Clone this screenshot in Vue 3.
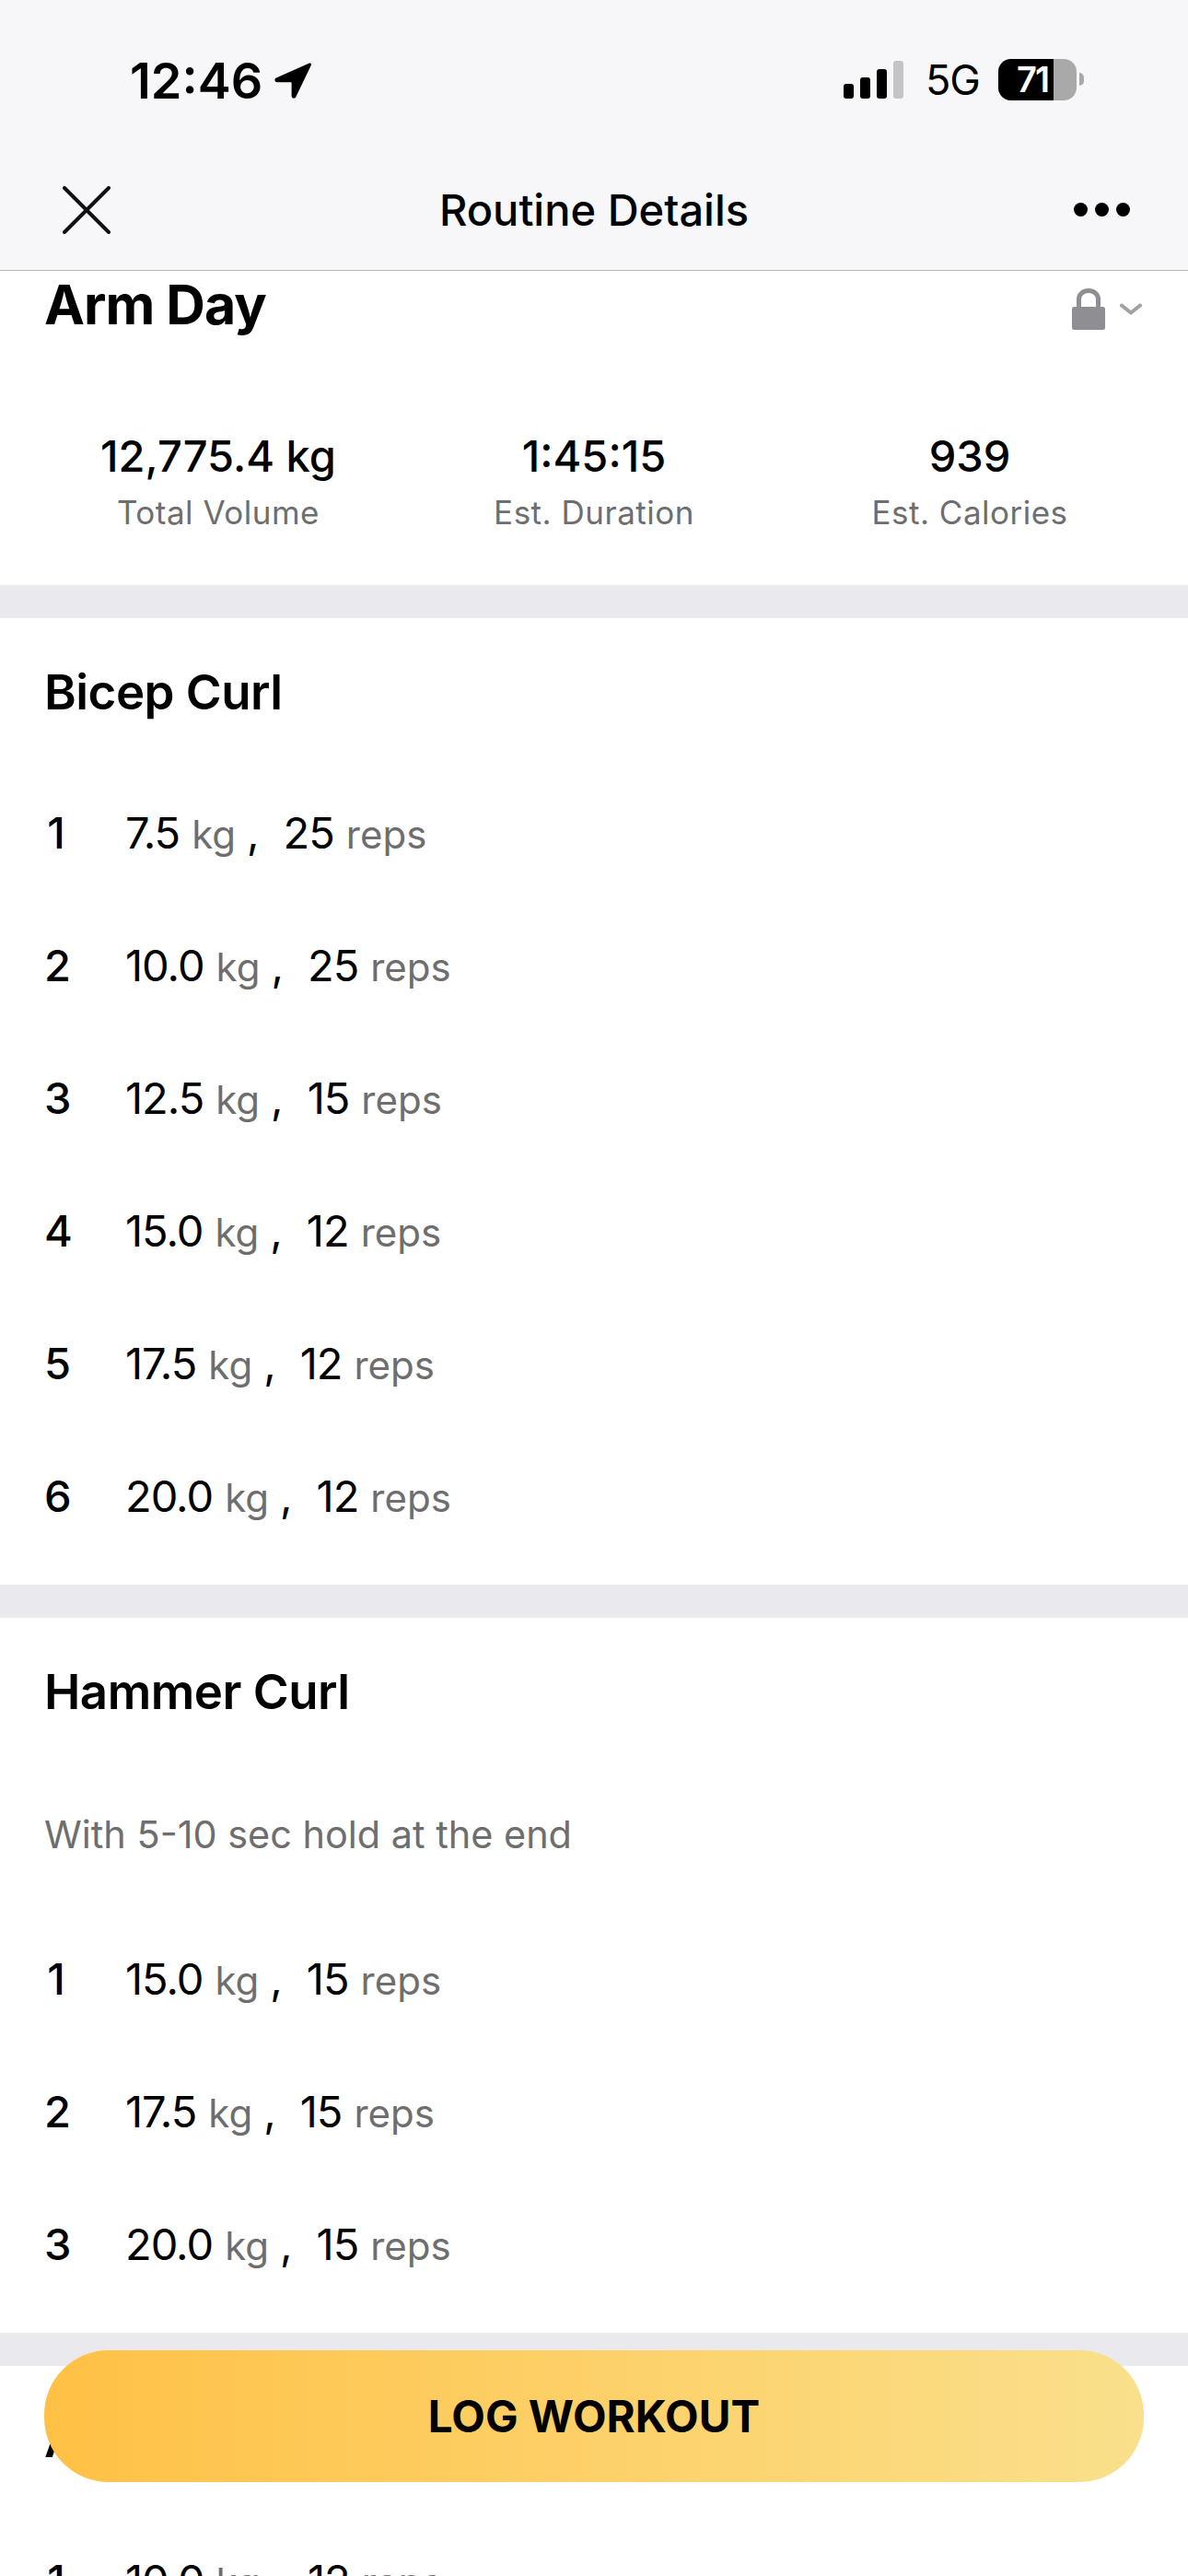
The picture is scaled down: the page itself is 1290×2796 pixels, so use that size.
<template>
  <div class="page">
    <header class="top">
      <div class="status">
        <div class="clock">
          <span class="time">12:46</span>
          <svg class="arrow" width="42" height="41" viewBox="0 0 42 41">
            <path d="M39 1.5 3 17.500c-2.600 1.200-1.800 4.700 1 4.700h14.600c.6 0 1 .4 1 1V37c0 3 3.700 3.600 4.800 1L41 3.500c.5-1.300-.7-2.500-2-2z" fill="#000" />
          </svg>
        </div>
        <div class="signal">
          <span class="bar b1"></span>
          <span class="bar b2"></span>
          <span class="bar b3"></span>
          <span class="bar b4"></span>
        </div>
        <span class="net">5G</span>
        <div class="battery">
          <div class="level">71</div>
        </div>
        <span class="nub"></span>
      </div>
      <div class="nav">
        <svg class="close" width="52" height="52" viewBox="0 0 52 52">
          <path d="M2 2 50 50M50 2 2 50" stroke="#111" stroke-width="4" stroke-linecap="round" fill="none" />
        </svg>
        <div class="title">Routine Details</div>
        <div class="dots"><i></i><i></i><i></i></div>
      </div>
    </header>

    <section class="summary">
      <div class="name-row">
        <h1>Arm Day</h1>
        <div class="privacy">
          <svg width="36" height="45" viewBox="0 0 36 45">
            <path d="M7.500 22V11.500a10.500 9 0 0 1 21 0V22" stroke="#8e8e93" stroke-width="5" fill="none" />
            <rect x="0" y="20" width="36" height="25" rx="2.500" fill="#8e8e93" />
          </svg>
          <svg class="chev" width="24" height="15" viewBox="0 0 24 15">
            <path d="M2 2.500 12 10.500 22 2.500" stroke="#a0a0a5" stroke-width="4" stroke-linecap="round" stroke-linejoin="round" fill="none" />
          </svg>
        </div>
      </div>
      <div class="stats">
        <div v-for="s in stats" :key="s.label" class="stat">
          <div class="stat-val">{{ s.value }}</div>
          <div class="stat-lab">{{ s.label }}</div>
        </div>
      </div>
    </section>

    <section v-for="ex in exercises" :key="ex.name" class="exercise">
      <h2>{{ ex.name }}</h2>
      <p v-if="ex.note" class="note">{{ ex.note }}</p>
      <div v-for="(set, i) in ex.sets" :key="i" class="set">
        <span class="num">{{ i + 1 }}</span>
        <span class="val">{{ set[0] }}</span>
        <span class="unit">kg</span>
        <span class="comma">,</span>
        <span class="val">{{ set[1] }}</span>
        <span class="unit">reps</span>
      </div>
    </section>

    <button class="log">LOG WORKOUT</button>
  </div>
</template>

<script setup>
const stats = [
  { value: '12,775.4 kg', label: 'Total Volume' },
  { value: '1:45:15', label: 'Est. Duration' },
  { value: '939', label: 'Est. Calories' },
]

const exercises = [
  {
    name: 'Bicep Curl',
    sets: [
      ['7.5', 25],
      ['10.0', 25],
      ['12.5', 15],
      ['15.0', 12],
      ['17.5', 12],
      ['20.0', 12],
    ],
  },
  {
    name: 'Hammer Curl',
    note: 'With 5-10 sec hold at the end',
    sets: [
      ['15.0', 15],
      ['17.5', 15],
      ['20.0', 15],
    ],
  },
  {
    name: 'A',
    sets: [['10.0', 12]],
  },
]
</script>

<style>
html,
body {
  margin: 0;
  background: #fff;
}
</style>

<style scoped>
.page {
  position: relative;
  width: 1290px;
  height: 2796px;
  overflow: hidden;
  background: #eaeaee;
  font-family: Inter, "Liberation Sans", sans-serif;
  color: #000;
}

.top {
  height: 293px;
  background: #f7f7f9;
  border-bottom: 1px solid #b4b4b6;
  display: flex;
  flex-direction: column;
}

.status {
  height: 176px;
  box-sizing: border-box;
  padding: 64px 0 0 141px;
  display: flex;
  align-items: flex-start;
}

.clock {
  display: flex;
  align-items: center;
  height: 46px;
  width: 775px;
}

.time {
  font-size: 54px;
  font-weight: 600;
}

.arrow {
  margin-left: 12px;
}

.signal {
  display: flex;
  align-items: flex-end;
  gap: 7px;
  height: 41px;
  margin-top: 2px;
}

.bar {
  width: 11px;
  border-radius: 3px;
  background: #000;
}

.b1 { height: 16px; }
.b2 { height: 23px; }
.b3 { height: 32px; }
.b4 { height: 41px; background: #c4c4c6; }

.net {
  margin-left: 24px;
  width: 56px;
  font-size: 45px;
  line-height: 46px;
  letter-spacing: -1px;
}

.battery {
  margin-left: 23px;
  width: 85px;
  height: 45px;
  border-radius: 14px;
  overflow: hidden;
  background: #a9a9a9;
}

.level {
  width: 60px;
  height: 45px;
  background: #000;
  color: #fff;
  font-size: 38px;
  font-weight: 600;
  letter-spacing: -2px;
  line-height: 44px;
  white-space: nowrap;
  padding-left: 20px;
  box-sizing: border-box;
}

.nub {
  width: 5px;
  height: 14px;
  margin: 15px 0 0 3px;
  border-radius: 0 5px 5px 0;
  background: #a9a9a9;
}

.nav {
  flex: 1;
  position: relative;
  display: flex;
  align-items: center;
  justify-content: space-between;
  padding: 0 63px 0 68px;
  margin-top: -14px;
}

.title {
  position: absolute;
  left: 0;
  right: 0;
  text-align: center;
  font-size: 47px;
  font-weight: 500;
}

.dots {
  display: flex;
  gap: 8px;
}

.dots i {
  width: 15px;
  height: 15px;
  border-radius: 50%;
  background: #000;
}

.summary {
  background: #fff;
  height: 341px;
  margin-bottom: 36px;
  box-sizing: border-box;
  padding: 0 48px;
}

.name-row {
  display: flex;
  justify-content: space-between;
  height: 76px;
}

h1 {
  margin: 0;
  font-size: 59px;
  line-height: 74px;
  font-weight: 700;
  letter-spacing: -1px;
}

.privacy {
  display: flex;
  align-items: flex-start;
  gap: 16px;
  padding: 19px 2px 0 0;
}

.chev {
  margin-top: 16px;
}

.stats {
  display: grid;
  grid-template-columns: repeat(3, 408px);
  margin: 95px 0 0 -15px;
}

.stat {
  text-align: center;
}

.stat-val {
  font-size: 47px;
  font-weight: 500;
  line-height: 60px;
}

.stat-lab {
  margin-top: 6px;
  font-size: 35px;
  line-height: 50px;
  color: #6e6e6e;
  letter-spacing: .5px;
}

.exercise {
  background: #fff;
  padding: 42px 48px 64px;
  margin-bottom: 36px;
}

h2 {
  margin: 0 0 83px;
  font-size: 52.800px;
  line-height: 76px;
  font-weight: 600;
  letter-spacing: -.5px;
}

.note {
  margin: 0 0 95px;
  padding-top: 4px;
  font-size: 41.400px;
  line-height: 60px;
  color: #6e6e6e;
}

.set {
  display: flex;
  align-items: baseline;
  height: 64px;
  font-size: 47px;
  line-height: 64px;
}

.set + .set {
  margin-top: 80px;
}

.num {
  width: 26px;
  margin-right: 62px;
  text-align: center;
  font-weight: 500;
}

.val {
  letter-spacing: -1px;
}

.unit {
  margin-left: 13px;
  font-size: 42px;
  color: #6e6e6e;
}

.comma {
  margin: 0 26px 0 12px;
}

.log {
  position: absolute;
  left: 48px;
  top: 2551px;
  width: 1194px;
  height: 143px;
  border: 0;
  border-radius: 70px;
  background: linear-gradient(90deg, #ffc145, #fae08c);
  font-family: inherit;
  font-size: 47.500px;
  font-weight: 700;
  color: #000;
}
</style>
